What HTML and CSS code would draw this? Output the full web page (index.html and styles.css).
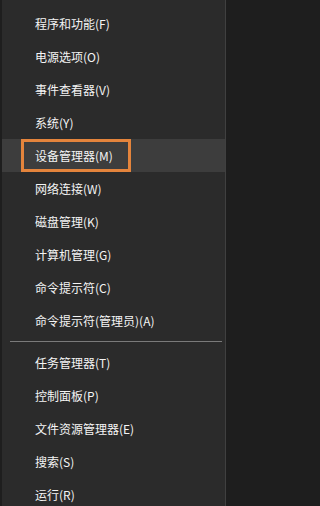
FILE: index.html
```html
<!DOCTYPE html>
<html lang="zh-CN">
<head>
<meta charset="utf-8">
<title>Win+X 菜单</title>
<link rel="stylesheet" href="styles.css">
</head>
<body>
<div class="frame">
  <ul class="menu">
    <li class="item">程序和功能(F)</li>
    <li class="item">电源选项(O)</li>
    <li class="item">事件查看器(V)</li>
    <li class="item">系统(Y)</li>
    <li class="item active"><span class="label">设备管理器(M)</span><span class="mark"></span></li>
    <li class="item">网络连接(W)</li>
    <li class="item">磁盘管理(K)</li>
    <li class="item">计算机管理(G)</li>
    <li class="item">命令提示符(C)</li>
    <li class="item">命令提示符(管理员)(A)</li>
    <li class="sep"></li>
    <li class="item">任务管理器(T)</li>
    <li class="item">控制面板(P)</li>
    <li class="item">文件资源管理器(E)</li>
    <li class="item">搜索(S)</li>
    <li class="item">运行(R)</li>
  </ul>
</div>
</body>
</html>
```
FILE: styles.css
```css
html, body {
  margin: 0;
  padding: 0;
}
body {
  background: #1e1e1e;
  width: 232px;
  height: 506px;
  overflow: hidden;
  font-family: "Noto Sans CJK SC", "Microsoft YaHei", sans-serif;
}
.frame {
  margin-left: 2px;
  width: 223px;
  height: 506px;
  background: #2b2b2b;
  border-right: 1px solid #404040;
}
.menu {
  list-style: none;
  margin: 0;
  padding: 7px 0 0 0;
}
.item {
  position: relative;
  height: 33px;
  display: flex;
  align-items: center;
  padding-left: 33px;
  color: #f4f4f4;
  font-size: 12px;
  line-height: 1;
  white-space: nowrap;
}
.item.active {
  background: #3d3d3d;
}
.mark {
  position: absolute;
  left: 19px;
  top: 0;
  width: 104px;
  height: 27px;
  border: 3px solid #e4843c;
}
.sep {
  height: 1px;
  margin: 4px 3px 4px 8px;
  background: #7a7a7a;
}
```
